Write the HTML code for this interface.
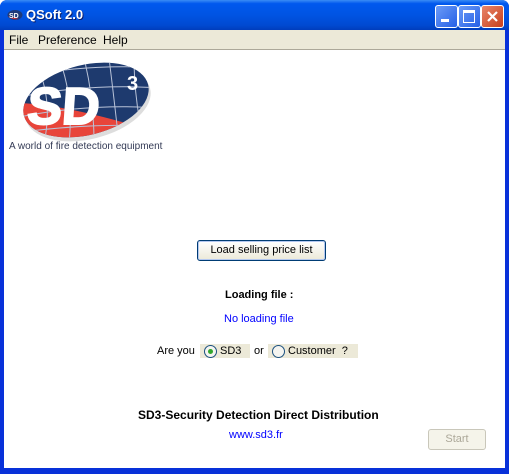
<!DOCTYPE html>
<html><head><style>
body{margin:0;width:509px;height:474px;overflow:hidden;background:#fff;font-family:"Liberation Sans",sans-serif;font-size:11px}
.win{position:absolute;left:0;top:0;width:509px;height:474px;background:#0831d9;border-radius:7px 7px 0 0}
.title{position:absolute;left:0;top:0;width:509px;height:30px;border-radius:7px 7px 0 0;background:linear-gradient(#3a8cf5 0%,#0058ee 12%,#0054e3 50%,#0049d0 85%,#003dbc 100%)}
.ttext{position:absolute;left:26px;top:7px;color:#fff;font-weight:bold;font-size:13px;text-shadow:1px 1px #0a1e6e}
.btn{position:absolute;top:5px;width:21px;height:21px;border:1px solid #fff;border-radius:3px;background:linear-gradient(135deg,#6b9bf7,#2660e6)}
.client{position:absolute;left:4px;top:30px;width:501px;height:438px;background:#fff}
.menu{position:absolute;left:0;top:0;width:501px;height:19px;background:#ece9d8;border-bottom:1px solid #aca899}
.menu span{position:absolute;top:3px;font-size:12px}
.t{position:absolute;white-space:nowrap}
</style></head><body>
<div class="win">
<div class="title">
<svg style="position:absolute;left:7px;top:9px" width="16" height="12"><ellipse cx="8" cy="6" rx="7.5" ry="5" fill="#1e3a7a"/><path d="M1 7 Q5 11 12 10 Q6 9 1 7Z" fill="#e03030"/><text x="2" y="9" font-size="7" font-weight="bold" fill="#fff" font-family="Liberation Sans">SD</text></svg>
<div class="ttext">QSoft 2.0</div>
<div class="btn" style="left:435px"><div style="position:absolute;left:5px;top:13px;width:8px;height:3px;background:#fff"></div></div>
<div class="btn" style="left:458px"><div style="position:absolute;left:4px;top:4px;width:10px;height:9px;border:1px solid #fff;border-top:3px solid #fff"></div></div>
<div class="btn" style="left:481px;background:linear-gradient(135deg,#e8866a,#c8401c)"><svg width="21" height="21"><path d="M6 6L15 15M15 6L6 15" stroke="#fff" stroke-width="2.2"/></svg></div>
</div>
<div class="client">
<div class="menu"><span style="left:5px">File</span><span style="left:34px">Preference</span><span style="left:99px">Help</span></div>
<svg style="position:absolute;left:10px;top:28px" width="145" height="85">
<defs><clipPath id="c"><ellipse cx="72" cy="42" rx="64" ry="35" transform="rotate(-14 72 42)"/></clipPath></defs>
<ellipse cx="74" cy="46" rx="64" ry="35" transform="rotate(-14 74 46)" fill="#bbb" opacity=".5"/>
<g clip-path="url(#c)"><rect width="145" height="85" fill="#1e3a6e"/><path d="M0 45 Q50 45 145 75 L145 85 L0 85Z" fill="#e8453a"/>
<g stroke="#b9c3d8" stroke-width="1" fill="none"><path d="M20 0 Q40 40 30 85M45 0 Q60 40 55 85M70 0 Q80 40 80 85M95 0 Q100 40 105 85M120 0 Q120 40 130 85"/><path d="M0 20 Q72 5 145 10M0 40 Q72 25 145 30M0 60 Q72 45 145 50M0 75 Q72 65 145 68"/></g></g>
<text x="17" y="66" font-family="Liberation Sans" font-weight="bold" font-size="52" fill="#fff" stroke="#fff" stroke-width="2" transform="skewX(-4)">SD</text>
<text x="113" y="32" font-family="Liberation Sans" font-weight="bold" font-size="20" fill="#fff">3</text>
</svg>
<div class="t" style="left:5px;top:111px;color:#333a55;font-size:10px">A world of fire detection equipment</div>
<div class="t" style="left:193px;top:210px;width:127px;height:19px;border:1px solid #003c74;border-radius:3px;background:linear-gradient(#fff,#ece9d8);box-shadow:inset 0 0 0 1px #b4c8f0;text-align:center;line-height:19px;font-size:11px">Load selling price list</div>
<div class="t" style="left:221px;top:259px;font-weight:bold">Loading file :</div>
<div class="t" style="left:220px;top:283px;color:#0000ff">No loading file</div>
<div class="t" style="left:153px;top:315px">Are you</div>
<div class="t" style="left:196px;top:314px;width:50px;height:14px;background:#ece9d8"></div>
<div class="t" style="left:200px;top:315px;width:11px;height:11px;border:1px solid #1c5180;border-radius:50%;background:#f4f4f0"><div style="position:absolute;left:3px;top:3px;width:5px;height:5px;border-radius:50%;background:#31a62c"></div></div>
<div class="t" style="left:216px;top:315px">SD3</div>
<div class="t" style="left:250px;top:315px">or</div>
<div class="t" style="left:264px;top:314px;width:90px;height:14px;background:#ece9d8"></div>
<div class="t" style="left:268px;top:315px;width:11px;height:11px;border:1px solid #1c5180;border-radius:50%;background:#f4f4f0"></div>
<div class="t" style="left:284px;top:315px">Customer &nbsp;?</div>
<div class="t" style="left:134px;top:378px;font-weight:bold;font-size:12px">SD3-Security Detection Direct Distribution</div>
<div class="t" style="left:225px;top:399px;color:#0000ff">www.sd3.fr</div>
<div class="t" style="left:424px;top:399px;width:56px;height:19px;border:1px solid #c9c7ba;border-radius:3px;background:#f5f4ea;color:#aca899;text-align:center;line-height:19px">Start</div>
</div>
</div>
</body></html>
